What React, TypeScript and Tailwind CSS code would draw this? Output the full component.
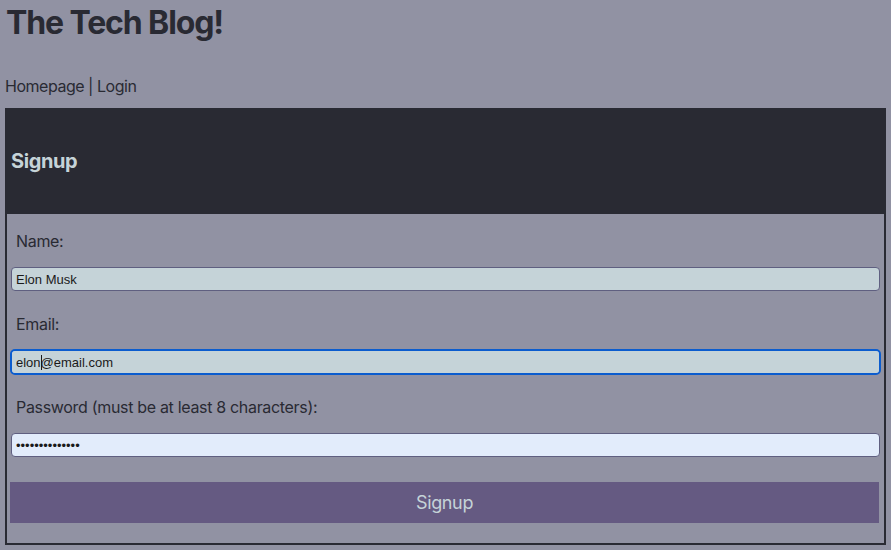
import React from 'react';

export default function App() {
    return (
        <div className="min-h-screen bg-[#9192a3] text-[#292a33]" style={{ fontFamily: 'Inter, "Liberation Sans", sans-serif' }}>
            {/* Header */}
            <h1 className="pt-[4px] pl-[6px] text-[32px] leading-[38px] font-bold tracking-[-0.035em]">The Tech Blog!</h1>
            <nav className="mt-[32px] pl-[5px] text-[16px] leading-[24px] tracking-[-0.03em]">
                <a href="#">Homepage</a> | <a href="#">Login</a>
            </nav>

            {/* Signup card */}
            <div className="mt-[10px] ml-[5px] w-[881px] border-2 border-t-0 border-[#292a33]">
                <div className="-mx-[2px] h-[106px] bg-[#292a33] flex items-center pl-[6px]">
                    <h2 className="text-[20px] font-bold text-[#c5d3d8] tracking-[-0.02em]">Signup</h2>
                </div>
                <form className="px-[2px] pt-[15px] pb-[20px] flex flex-col">
                    <label className="pl-[7px] text-[16px] leading-[24px] tracking-[-0.02em]">Name:</label>
                    <input
                        className="block mt-[14px] mx-[2px] h-[24px] rounded-[4px] border border-[#5f5f80] bg-[#c5d3d8] px-[4px] text-[13px] text-[#1a1a1a] outline-none"
                        style={{ fontFamily: '"Liberation Sans", Arial, sans-serif' }}
                        defaultValue="Elon Musk"
                        readOnly
                    />
                    <label className="mt-[21px] pl-[7px] text-[16px] leading-[24px] tracking-[-0.02em]">Email:</label>
                    <div className="relative mt-[14px] mx-[2px]">
                        <input
                            className="block w-full h-[24px] rounded-[4px] border border-white bg-[#c5d3d8] px-[4px] text-[13px] text-[#1a1a1a] outline-2 outline-[#0b5cce] -outline-offset-1"
                            style={{ fontFamily: '"Liberation Sans", Arial, sans-serif' }}
                            defaultValue="elon@email.com"
                            readOnly
                        />
                        <span className="absolute left-[30px] top-[5px] h-[15px] w-px bg-[#1a1a1a]"></span>
                    </div>
                    <label className="mt-[21px] pl-[7px] text-[16px] leading-[24px] tracking-[-0.02em]">Password (must be at least 8 characters):</label>
                    <input
                        type="password"
                        className="block mt-[14px] mx-[2px] h-[24px] rounded-[4px] border border-[#5f5f80] bg-[#e2ecfb] px-[4px] text-[13px] text-[#1a1a1a] outline-none"
                        style={{ fontFamily: '"Liberation Sans", Arial, sans-serif' }}
                        defaultValue="12345678901234"
                        readOnly
                    />
                    <button
                        type="button"
                        className="mt-[25px] ml-[1px] mr-[3px] h-[41px] bg-[#655a82] text-[18px] text-[#c5d3d8] tracking-[-0.02em]"
                    >
                        Signup
                    </button>
                </form>
            </div>
        </div>
    );
}
